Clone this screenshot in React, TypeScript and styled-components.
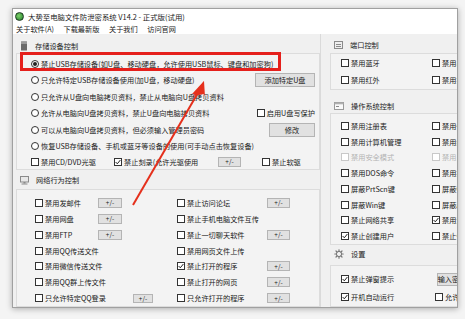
import React from 'react';
import styled, { createGlobalStyle } from 'styled-components';

const Global = createGlobalStyle`
  html, body { margin: 0; padding: 0; background: #f5f5f5; }
  body { font-family: "Noto Sans CJK SC", "Noto Sans", sans-serif; color: #1a1a1a; }
  * { box-sizing: border-box; }
`;

const Stage = styled.div`
  position: relative;
  width: 465px;
  height: 319px;
  padding: 8px 0 0 12px;
  background: #f4f4f4;
  overflow: hidden;
`;

const Window = styled.div`
  width: 446px;
  height: 300px;
  display: flex;
  flex-direction: column;
  background: #f0f0f0;
  border: 1px solid #a0a0a0;
  box-shadow: 0 1px 6px rgba(0, 0, 0, 0.3);
  overflow: hidden;
`;

const TitleBar = styled.div`
  height: 14px;
  display: flex;
  align-items: center;
  gap: 4px;
  padding-left: 2px;
  background: #fff;
  font-size: 7.4px;
  white-space: nowrap;
`;

const AppIcon = styled.div`
  width: 9px;
  height: 9px;
  border-radius: 50%;
  background: radial-gradient(circle at 40% 40%, #7fd36a, #1e7a2a);
  border: 1px solid #1d3a20;
`;

const MenuBar = styled.div`
  height: 11px;
  display: flex;
  align-items: center;
  gap: 9.5px;
  padding-left: 3px;
  background: #fff;
  font-size: 7.2px;
  white-space: nowrap;
`;

const Client = styled.div`
  flex: 1;
  display: flex;
  min-height: 0;
`;

const LeftCol = styled.div`
  width: 307px;
  display: flex;
  flex-direction: column;
  padding: 6px 0 0 3px;
`;

const RightCol = styled.div`
  flex: 1;
  display: flex;
  flex-direction: column;
  padding: 6px 0 0 9px;
  border-left: 1px solid #dadada;
  min-width: 0;
  overflow: hidden;
`;

const Header = styled.div<{ $mt?: number }>`
  height: 12px;
  display: flex;
  align-items: center;
  gap: 7px;
  padding-left: 4px;
  margin-top: ${p => p.$mt ?? 0}px;
  font-size: 7.2px;
  color: #222;
  white-space: nowrap;
`;

const Box = styled.div<{ $mt?: number; $h: number; $pt?: number; $pl?: number }>`
  margin-top: ${p => p.$mt ?? 1}px;
  height: ${p => p.$h}px;
  padding: ${p => p.$pt ?? 0}px 4px 0 ${p => p.$pl ?? 14}px;
  border: 1px solid #dcdcdc;
  background: #f3f3f3;
  display: flex;
  flex-direction: column;
`;

const WideBox = styled(Box)`
  width: 200px;
  border-right: none;
`;

const Row = styled.div<{ $h: number }>`
  height: ${p => p.$h}px;
  display: flex;
  align-items: center;
  font-size: 7.2px;
  white-space: nowrap;
`;

const Label = styled.label<{ $w?: number; $ml?: number; $disabled?: boolean }>`
  display: flex;
  align-items: center;
  gap: 2px;
  width: ${p => (p.$w ? `${p.$w}px` : 'auto')};
  margin-left: ${p => p.$ml ?? 0}px;
  flex: none;
  color: ${p => (p.$disabled ? '#b4b4b4' : '#1a1a1a')};
  white-space: nowrap;
`;

const RadioLabel = styled(Label)`
  flex: 1;
  min-width: 0;
`;

const RadioMark = styled.span<{ $on?: boolean }>`
  width: 8px;
  height: 8px;
  border-radius: 50%;
  border: 1px solid #333;
  background: #fff;
  flex: none;
  display: flex;
  align-items: center;
  justify-content: center;
  &::after {
    content: '';
    width: 4px;
    height: 4px;
    border-radius: 50%;
    background: ${p => (p.$on ? '#222' : 'transparent')};
  }
`;

const CheckMark = styled.span<{ $disabled?: boolean }>`
  width: 8px;
  height: 8px;
  border: 1px solid ${p => (p.$disabled ? '#c8c8c8' : '#333')};
  background: #fff;
  flex: none;
  display: flex;
  align-items: center;
  justify-content: center;
`;

const Btn = styled.div<{ $w: number; $h?: number; $ml?: number }>`
  width: ${p => p.$w}px;
  height: ${p => p.$h ?? 10}px;
  margin-left: ${p => p.$ml ?? 0}px;
  flex: none;
  display: flex;
  align-items: center;
  justify-content: center;
  background: #e1e1e1;
  border: 1px solid #b4b4b4;
  font-size: ${p => ((p.$h ?? 10) > 11 ? 7.2 : 6.4)}px;
  color: #222;
  white-space: nowrap;
`;

const Half = styled.div<{ $w: number }>`
  width: ${p => p.$w}px;
  display: flex;
  align-items: center;
  flex: none;
`;

const Overlay = styled.svg`
  position: absolute;
  left: 0;
  top: 0;
  pointer-events: none;
`;

const Radio = ({ on, children }: { on?: boolean; children: React.ReactNode }) => (
  <RadioLabel>
    <RadioMark $on={on} />
    <span>{children}</span>
  </RadioLabel>
);

const Check = ({
  on,
  w,
  ml,
  disabled,
  children,
}: {
  on?: boolean;
  w?: number;
  ml?: number;
  disabled?: boolean;
  children: React.ReactNode;
}) => (
  <Label $w={w} $ml={ml} $disabled={disabled}>
    <CheckMark $disabled={disabled}>
      {on && (
        <svg width="6" height="6" viewBox="0 0 6 6">
          <polyline points="0.6,3 2.3,4.8 5.4,1" fill="none" stroke="#222" strokeWidth="1" />
        </svg>
      )}
    </CheckMark>
    <span>{children}</span>
  </Label>
);

const UsbIcon = () => (
  <svg width="8" height="10" viewBox="0 0 8 10">
    <rect x="1" y="0.5" width="6" height="9" rx="0.5" fill="#6a6a6a" />
    <rect x="1" y="0.5" width="6" height="2.5" fill="#9a9a9a" />
  </svg>
);

const NetIcon = () => (
  <svg width="9" height="9" viewBox="0 0 9 9">
    <rect x="0.5" y="0.5" width="8" height="5.5" fill="#e8e8e8" stroke="#8a8a8a" />
    <rect x="3.5" y="6" width="2" height="1.5" fill="#8a8a8a" />
    <rect x="1.5" y="7.5" width="6" height="1" fill="#8a8a8a" />
  </svg>
);

const PortIcon = () => (
  <svg width="9" height="8" viewBox="0 0 9 8">
    <rect x="0.5" y="0.5" width="8" height="7" fill="#eee" stroke="#8a8a8a" />
    <rect x="2" y="3" width="5" height="1" fill="#8a8a8a" />
    <rect x="2" y="5" width="5" height="1" fill="#8a8a8a" />
  </svg>
);

const OsIcon = () => (
  <svg width="10" height="8" viewBox="0 0 10 8">
    <rect x="0.5" y="0.5" width="9" height="7" fill="#fafafa" stroke="#9a9a9a" />
    <rect x="0.5" y="0.5" width="9" height="1.8" fill="#b0b0b0" />
    <rect x="2" y="4" width="3" height="1" fill="#8a8a8a" />
  </svg>
);

const GearIcon = () => (
  <svg width="10" height="10" viewBox="0 0 10 10">
    <g stroke="#777" strokeWidth="1.2" strokeLinecap="round">
      <line x1="5" y1="0.8" x2="5" y2="2.2" />
      <line x1="5" y1="7.8" x2="5" y2="9.2" />
      <line x1="0.8" y1="5" x2="2.2" y2="5" />
      <line x1="7.8" y1="5" x2="9.2" y2="5" />
      <line x1="2" y1="2" x2="3" y2="3" />
      <line x1="7" y1="7" x2="8" y2="8" />
      <line x1="8" y1="2" x2="7" y2="3" />
      <line x1="2" y1="8" x2="3" y2="7" />
    </g>
    <circle cx="5" cy="5" r="2.6" fill="none" stroke="#777" strokeWidth="1" />
  </svg>
);

const netRows: [string, boolean, number, boolean, string, boolean, boolean][] = [
  ['禁用发邮件', true, 63, false, '禁止访问论坛', true, false],
  ['禁用网盘', true, 63, false, '禁止手机电脑文件互传', false, false],
  ['禁用FTP', true, 63, false, '禁止一切聊天软件', true, false],
  ['禁用QQ传送文件', false, 63, false, '禁用网页文件上传', false, false],
  ['禁用微信传送文件', false, 63, false, '禁止打开的程序', true, true],
  ['禁用QQ群上传文件', false, 63, false, '禁止打开的网页', true, false],
  ['只允许特定QQ登录', true, 98, false, '只允许打开的程序', true, false],
];

const osRows: [string, boolean, boolean, string, boolean, boolean][] = [
  ['禁用注册表', false, false, '禁用任务管理器', false, false],
  ['禁用计算机管理', false, false, '禁用组策略', false, false],
  ['禁用安全模式', false, true, '禁用系统还原', false, true],
  ['禁用DOS命令', false, false, '禁用控制面板', false, false],
  ['屏蔽PrtScn键', false, false, '屏蔽Ctrl+Alt+Del', false, false],
  ['屏蔽Win键', false, false, '屏蔽Alt+Tab', false, false],
  ['禁止网络共享', false, false, '禁用远程桌面', true, false],
  ['禁止创建用户', true, false, '禁止修改计算机名', false, false],
];

export default function App() {
  return (
    <Stage>
      <Global />
      <Window>
        <TitleBar>
          <AppIcon />
          <span>大势至电脑文件防泄密系统 V14.2 - 正式版(试用)</span>
        </TitleBar>
        <MenuBar>
          <span>关于软件(A)</span>
          <span>下载最新版</span>
          <span>关于我们</span>
          <span>访问官网</span>
        </MenuBar>
        <Client>
          <LeftCol>
            <Header>
              <UsbIcon />
              <span>存储设备控制</span>
            </Header>
            <Box $h={117} $pt={1} $pl={14}>
              <Row $h={17}>
                <Radio on>禁止USB存储设备(如U盘、移动硬盘，允许使用USB鼠标、键盘和加密狗)</Radio>
              </Row>
              <Row $h={16.5}>
                <Radio>只允许特定USB存储设备使用(加U盘，移动硬盘)</Radio>
                <Btn $w={60} $h={14}>添加特定U盘</Btn>
              </Row>
              <Row $h={16.5}>
                <Radio>只允许从U盘向电脑拷贝资料，禁止从电脑向U盘拷贝资料</Radio>
              </Row>
              <Row $h={16.5}>
                <Radio>允许从电脑向U盘拷贝资料，禁止U盘向电脑拷贝资料</Radio>
                <Check>启用U盘写保护</Check>
              </Row>
              <Row $h={16.5}>
                <Radio>可以从电脑向U盘拷贝资料，但必须输入管理员密码</Radio>
                <Btn $w={46} $h={14}>修改</Btn>
              </Row>
              <Row $h={16.5}>
                <Radio>恢复USB存储设备、手机或蓝牙等设备的使用(可手动点击恢复设备)</Radio>
              </Row>
              <Row $h={14}>
                <Check w={83}>禁用CD/DVD光驱</Check>
                <Check on w={104}>禁止刻录(允许光驱使用</Check>
                <Btn $w={23}>+/-</Btn>
                <Check ml={21}>禁止软驱</Check>
              </Row>
            </Box>
            <Header $mt={4}>
              <NetIcon />
              <span>网络行为控制</span>
            </Header>
            <Box $mt={3} $h={118} $pt={5} $pl={18}>
              {netRows.map(([l, lb, lw, lon, r, rb, ron]) => (
                <Row $h={16.2} key={l}>
                  <Half $w={142}>
                    <Check w={lw} on={lon}>{l}</Check>
                    {lb && <Btn $w={lw > 63 ? 20 : 24} $h={lw > 63 ? 9 : 10}>+/-</Btn>}
                  </Half>
                  <Half $w={115}>
                    <Check w={90} on={ron}>{r}</Check>
                    {rb && <Btn $w={23}>+/-</Btn>}
                  </Half>
                </Row>
              ))}
            </Box>
          </LeftCol>
          <RightCol>
            <Header>
              <PortIcon />
              <span>端口控制</span>
            </Header>
            <WideBox $mt={3} $h={38} $pt={0} $pl={10}>
              <Row $h={17.5}>
                <Check w={91}>禁用蓝牙</Check>
                <Check>禁用串口</Check>
              </Row>
              <Row $h={17.5}>
                <Check w={91}>禁用红外</Check>
                <Check>禁用打印机</Check>
              </Row>
            </WideBox>
            <Header $mt={11}>
              <OsIcon />
              <span>操作系统控制</span>
            </Header>
            <WideBox $mt={2} $h={132} $pt={4} $pl={10}>
              {osRows.map(([l, lon, dis, r, ron]) => (
                <Row $h={16.1} key={l}>
                  <Check w={91} on={lon} disabled={dis}>{l}</Check>
                  <Check on={ron} disabled={dis}>{r}</Check>
                </Row>
              ))}
            </WideBox>
            <Header $mt={4}>
              <GearIcon />
              <span>设置</span>
            </Header>
            <WideBox $mt={6} $h={60} $pt={4} $pl={10}>
              <Row $h={18}>
                <Check w={96} on>禁止弹窗提示</Check>
                <Btn $w={30} $h={13}>输入密码</Btn>
              </Row>
              <Row $h={18}>
                <Check w={94} on>开机自动运行</Check>
                <Check>允许卸载</Check>
              </Row>
            </WideBox>
          </RightCol>
        </Client>
      </Window>
      <Overlay width="465" height="319" viewBox="0 0 465 319">
        <rect x="21.5" y="53.5" width="258" height="16" fill="none" stroke="#e5201c" strokeWidth="3" />
        <line x1="133" y1="205" x2="199" y2="91" stroke="#e5301c" strokeWidth="2" />
        <polygon points="204,81 193,96 204,94 205,97" fill="#e5301c" />
        <polygon points="204,81 192,94 200,94" fill="#e5301c" />
      </Overlay>
    </Stage>
  );
}
